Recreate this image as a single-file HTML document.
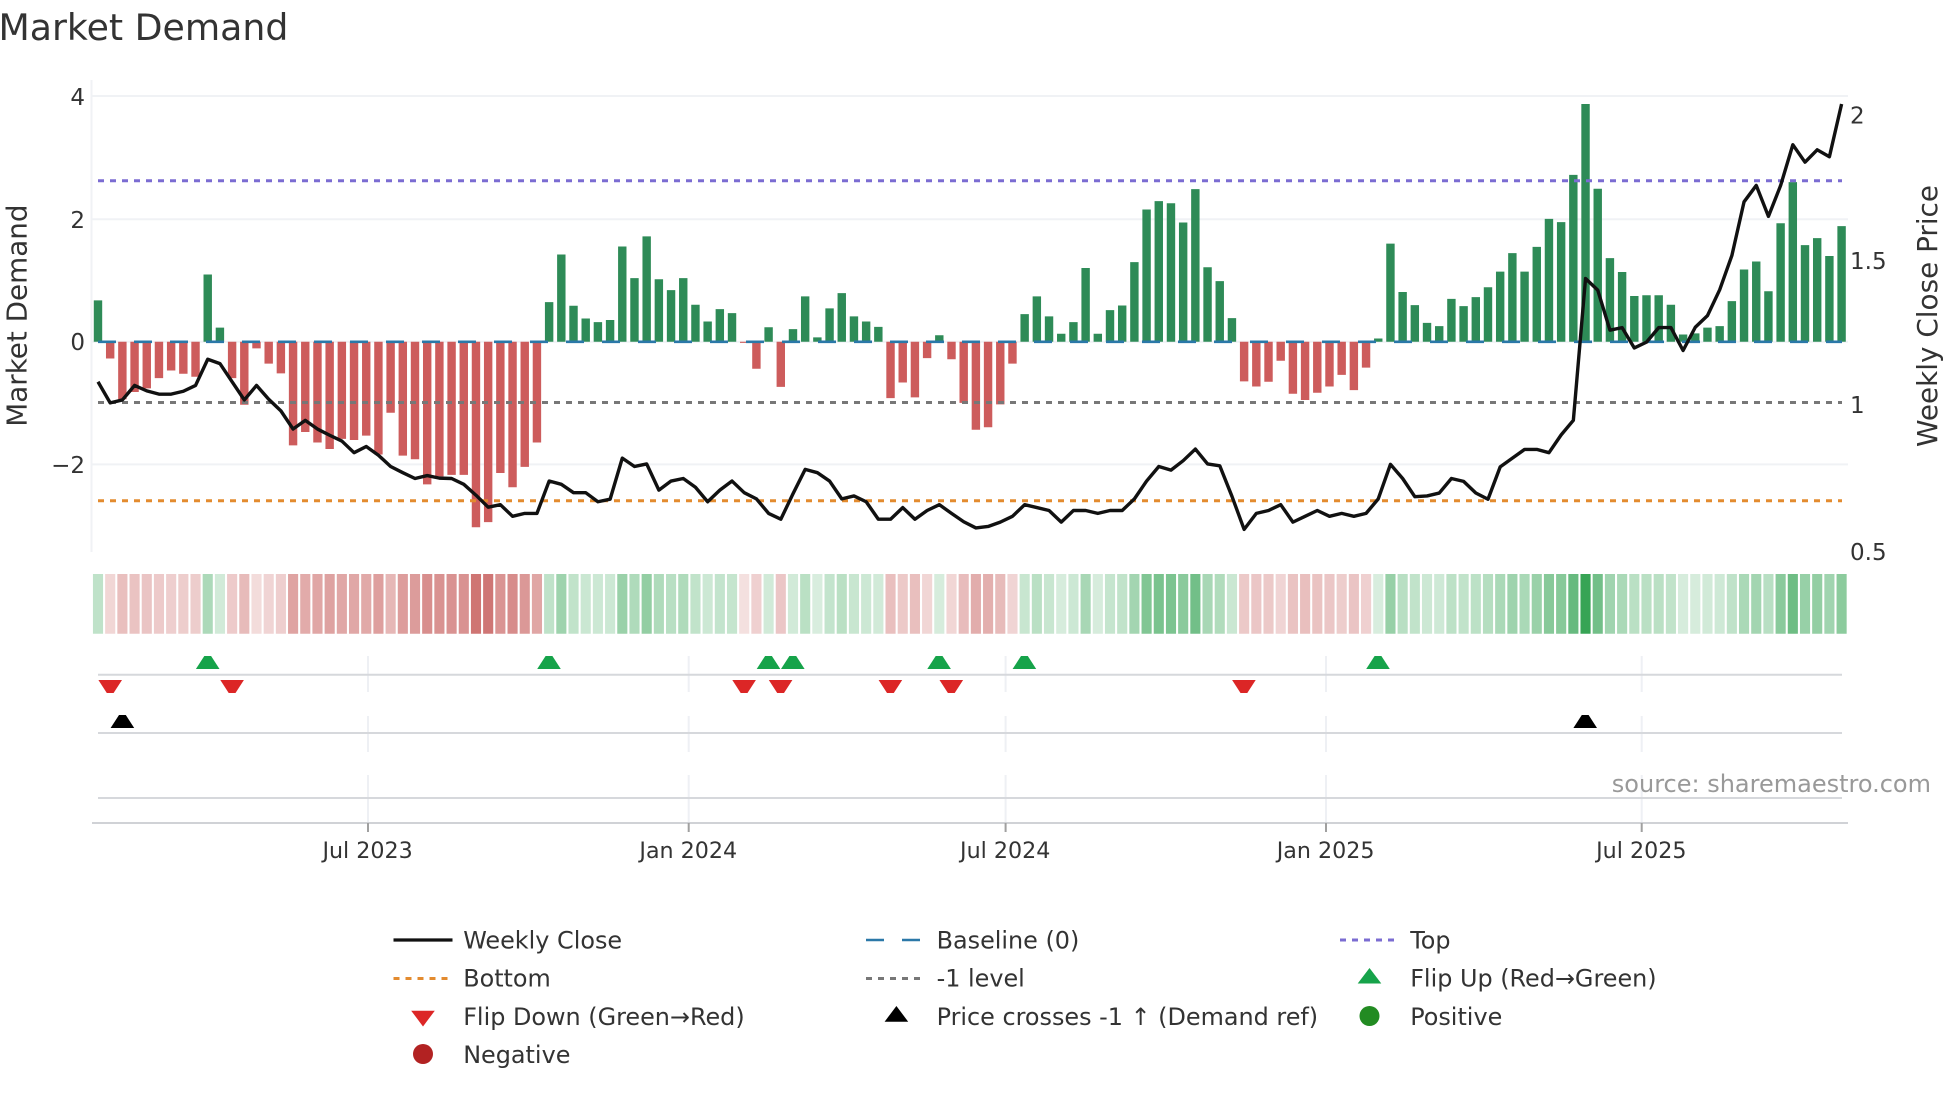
<!DOCTYPE html>
<html><head><meta charset="utf-8"><title>Market Demand</title>
<style>
html,body{margin:0;padding:0;background:#fff;width:1960px;height:1102px;overflow:hidden}
svg{display:block}
text{font-family:"DejaVu Sans","Liberation Sans",sans-serif;fill:#333}
</style></head><body>
<svg width="1960" height="1102" viewBox="0 0 1960 1102" xmlns="http://www.w3.org/2000/svg">
<rect width="1960" height="1102" fill="#fff"/>
<text x="-1.5" y="40" font-size="36.25">Market Demand</text>
<!-- grid -->
<g stroke="#f0f2f5" stroke-width="2" fill="none">
<path d="M91.5 80V552"/>
<path d="M92 96H1848M92 219.3H1848M92 341.8H1848M92 464.4H1848"/>
</g>
<!-- bars -->
<g transform="translate(93.78,341.8) scale(12.193,.3636)">
<path fill="#2e8b57" d="M0 0h.69V-114h-.69zM9 0h.69V-185h-.69zM10 0h.69V-39h-.69zM37 0h.69V-109h-.69zM38 0h.69V-240h-.69zM39 0h.69V-99h-.69zM40 0h.69V-64h-.69zM41 0h.69V-54h-.69zM42 0h.69V-60h-.69zM43 0h.69V-262h-.69zM44 0h.69V-175h-.69zM45 0h.69V-290h-.69zM46 0h.69V-172h-.69zM47 0h.69V-142h-.69zM48 0h.69V-175h-.69zM49 0h.69V-102h-.69zM50 0h.69V-56h-.69zM51 0h.69V-90h-.69zM52 0h.69V-79h-.69zM55 0h.69V-40h-.69zM57 0h.69V-35h-.69zM58 0h.69V-125h-.69zM59 0h.69V-12h-.69zM60 0h.69V-92h-.69zM61 0h.69V-134h-.69zM62 0h.69V-70h-.69zM63 0h.69V-56h-.69zM64 0h.69V-41h-.69zM69 0h.69V-18h-.69zM76 0h.69V-76h-.69zM77 0h.69V-125h-.69zM78 0h.69V-70h-.69zM79 0h.69V-22h-.69zM80 0h.69V-54h-.69zM81 0h.69V-203h-.69zM82 0h.69V-22h-.69zM83 0h.69V-87h-.69zM84 0h.69V-100h-.69zM85 0h.69V-219h-.69zM86 0h.69V-364h-.69zM87 0h.69V-387h-.69zM88 0h.69V-381h-.69zM89 0h.69V-328h-.69zM90 0h.69V-420h-.69zM91 0h.69V-205h-.69zM92 0h.69V-167h-.69zM93 0h.69V-65h-.69zM105 0h.69V-9h-.69zM106 0h.69V-270h-.69zM107 0h.69V-137h-.69zM108 0h.69V-101h-.69zM109 0h.69V-52h-.69zM110 0h.69V-43h-.69zM111 0h.69V-118h-.69zM112 0h.69V-98h-.69zM113 0h.69V-123h-.69zM114 0h.69V-150h-.69zM115 0h.69V-193h-.69zM116 0h.69V-244h-.69zM117 0h.69V-193h-.69zM118 0h.69V-261h-.69zM119 0h.69V-338h-.69zM120 0h.69V-329h-.69zM121 0h.69V-459h-.69zM122 0h.69V-654h-.69zM123 0h.69V-421h-.69zM124 0h.69V-230h-.69zM125 0h.69V-192h-.69zM126 0h.69V-126h-.69zM127 0h.69V-128h-.69zM128 0h.69V-128h-.69zM129 0h.69V-102h-.69zM130 0h.69V-20h-.69zM131 0h.69V-23h-.69zM132 0h.69V-39h-.69zM133 0h.69V-43h-.69zM134 0h.69V-112h-.69zM135 0h.69V-199h-.69zM136 0h.69V-221h-.69zM137 0h.69V-139h-.69zM138 0h.69V-326h-.69zM139 0h.69V-439h-.69zM140 0h.69V-266h-.69zM141 0h.69V-285h-.69zM142 0h.69V-236h-.69zM143 0h.69V-318h-.69z"/>
<path fill="#cd5c5c" d="M1 0h.69V46h-.69zM2 0h.69V158h-.69zM3 0h.69V138h-.69zM4 0h.69V128h-.69zM5 0h.69V100h-.69zM6 0h.69V79h-.69zM7 0h.69V88h-.69zM8 0h.69V96h-.69zM11 0h.69V100h-.69zM12 0h.69V173h-.69zM13 0h.69V18h-.69zM14 0h.69V60h-.69zM15 0h.69V87h-.69zM16 0h.69V285h-.69zM17 0h.69V248h-.69zM18 0h.69V277h-.69zM19 0h.69V295h-.69zM20 0h.69V267h-.69zM21 0h.69V270h-.69zM22 0h.69V258h-.69zM23 0h.69V310h-.69zM24 0h.69V195h-.69zM25 0h.69V313h-.69zM26 0h.69V323h-.69zM27 0h.69V392h-.69zM28 0h.69V370h-.69zM29 0h.69V366h-.69zM30 0h.69V366h-.69zM31 0h.69V510h-.69zM32 0h.69V496h-.69zM33 0h.69V361h-.69zM34 0h.69V400h-.69zM35 0h.69V344h-.69zM36 0h.69V277h-.69zM53 0h.69V3h-.69zM54 0h.69V74h-.69zM56 0h.69V124h-.69zM65 0h.69V155h-.69zM66 0h.69V112h-.69zM67 0h.69V153h-.69zM68 0h.69V45h-.69zM70 0h.69V48h-.69zM71 0h.69V168h-.69zM72 0h.69V242h-.69zM73 0h.69V235h-.69zM74 0h.69V172h-.69zM75 0h.69V60h-.69zM94 0h.69V109h-.69zM95 0h.69V123h-.69zM96 0h.69V110h-.69zM97 0h.69V52h-.69zM98 0h.69V143h-.69zM99 0h.69V160h-.69zM100 0h.69V140h-.69zM101 0h.69V123h-.69zM102 0h.69V91h-.69zM103 0h.69V133h-.69zM104 0h.69V71h-.69z"/>
</g>
<!-- reference lines -->
<g fill="none">
<path d="M98 341.8H1842" stroke="#2b78a8" stroke-width="2.6" stroke-dasharray="18 18"/>
<path d="M98 180.7H1842" stroke="#7b6cd2" stroke-width="3" stroke-dasharray="6 6"/>
<path d="M98 500.7H1842" stroke="#e38b2f" stroke-width="3" stroke-dasharray="6 6"/>
<path d="M98 402.5H1842" stroke="#777" stroke-width="3" stroke-dasharray="6 6"/>
</g>
<!-- price -->
<g transform="translate(98,0) scale(12.193,.3636)">
<polyline fill="none" stroke="#111" stroke-width="3.4" stroke-linejoin="round" vector-effect="non-scaling-stroke" points="0,1050 1,1108 2,1100 3,1060 4,1075 5,1084 6,1084 7,1076 8,1060 9,988 10,1000 11,1050 12,1100 13,1060 14,1098 15,1130 16,1180 17,1156 18,1180 19,1197 20,1213 21,1245 22,1228 23,1252 24,1283 25,1300 26,1316 27,1308 28,1315 29,1316 30,1332 31,1362 32,1395 33,1388 34,1420 35,1412 36,1412 37,1323 38,1332 39,1355 40,1355 41,1380 42,1373 43,1260 44,1283 45,1276 46,1348 47,1323 48,1316 49,1340 50,1380 51,1348 52,1323 53,1355 54,1372 55,1412 56,1428 57,1358 58,1291 59,1300 60,1323 61,1372 62,1364 63,1380 64,1428 65,1428 66,1396 67,1428 68,1404 69,1388 70,1412 71,1435 72,1452 73,1448 74,1436 75,1420 76,1388 77,1396 78,1404 79,1436 80,1404 81,1404 82,1412 83,1404 84,1404 85,1372 86,1323 87,1283 88,1293 89,1267 90,1235 91,1276 92,1281 93,1365 94,1456 95,1412 96,1404 97,1388 98,1436 99,1420 100,1404 101,1420 102,1412 103,1420 104,1412 105,1372 106,1277 107,1316 108,1366 109,1364 110,1356 111,1316 112,1324 113,1356 114,1373 115,1284 116,1260 117,1236 118,1236 119,1245 120,1196 121,1156 122,766 123,798 124,908 125,901 126,957 127,941 128,901 129,901 130,964 131,900 132,868 133,797 134,703 135,555 136,510 137,595 138,510 139,398 140,446 141,412 142,431 143,286"/>
</g>
<!-- axis labels -->
<g font-size="23" text-anchor="end">
<text x="85" y="104.8">4</text><text x="85" y="227.8">2</text><text x="85" y="350.2">0</text><text x="85" y="472.8">−2</text>
</g>
<g font-size="23">
<text x="1850" y="123.6">2</text><text x="1850" y="268.8">1.5</text><text x="1850" y="413.2">1</text><text x="1850" y="559.8">0.5</text>
</g>
<text transform="translate(26.5,315.6) rotate(-90)" font-size="27.8" text-anchor="middle">Market Demand</text>
<text transform="translate(1937,316) rotate(-90)" font-size="27.85" text-anchor="middle">Weekly Close Price</text>
<!-- heat strip -->
<g transform="translate(92.94,574) scale(12.193,59.8)">
<g fill="#19973c">
<path opacity=".28" d="M0 0h.83v1h-.83z"/><path opacity=".36" d="M9 0h.83v1h-.83z"/><path opacity=".2" d="M10 0h.83v1h-.83z"/><path opacity=".28" d="M37 0h.83v1h-.83z"/><path opacity=".42" d="M38 0h.83v1h-.83z"/><path opacity=".27" d="M39 0h.83v1h-.83z"/><path opacity=".23" d="M40 0h.83v1h-.83z"/><path opacity=".22" d="M41 0h.83v1h-.83z"/><path opacity=".22" d="M42 0h.83v1h-.83z"/><path opacity=".44" d="M43 0h.83v1h-.83z"/><path opacity=".35" d="M44 0h.83v1h-.83z"/><path opacity=".47" d="M45 0h.83v1h-.83z"/><path opacity=".35" d="M46 0h.83v1h-.83z"/><path opacity=".31" d="M47 0h.83v1h-.83z"/><path opacity=".35" d="M48 0h.83v1h-.83z"/><path opacity=".27" d="M49 0h.83v1h-.83z"/><path opacity=".22" d="M50 0h.83v1h-.83z"/><path opacity=".26" d="M51 0h.83v1h-.83z"/><path opacity=".25" d="M52 0h.83v1h-.83z"/><path opacity=".2" d="M55 0h.83v1h-.83z"/><path opacity=".2" d="M57 0h.83v1h-.83z"/><path opacity=".3" d="M58 0h.83v1h-.83z"/><path opacity=".17" d="M59 0h.83v1h-.83z"/><path opacity=".26" d="M60 0h.83v1h-.83z"/><path opacity=".3" d="M61 0h.83v1h-.83z"/><path opacity=".24" d="M62 0h.83v1h-.83z"/><path opacity=".22" d="M63 0h.83v1h-.83z"/><path opacity=".2" d="M64 0h.83v1h-.83z"/><path opacity=".18" d="M69 0h.83v1h-.83z"/><path opacity=".24" d="M76 0h.83v1h-.83z"/><path opacity=".3" d="M77 0h.83v1h-.83z"/><path opacity=".24" d="M78 0h.83v1h-.83z"/><path opacity=".18" d="M79 0h.83v1h-.83z"/><path opacity=".22" d="M80 0h.83v1h-.83z"/><path opacity=".38" d="M81 0h.83v1h-.83z"/><path opacity=".18" d="M82 0h.83v1h-.83z"/><path opacity=".25" d="M83 0h.83v1h-.83z"/><path opacity=".27" d="M84 0h.83v1h-.83z"/><path opacity=".4" d="M85 0h.83v1h-.83z"/><path opacity=".55" d="M86 0h.83v1h-.83z"/><path opacity=".58" d="M87 0h.83v1h-.83z"/><path opacity=".57" d="M88 0h.83v1h-.83z"/><path opacity=".51" d="M89 0h.83v1h-.83z"/><path opacity=".61" d="M90 0h.83v1h-.83z"/><path opacity=".38" d="M91 0h.83v1h-.83z"/><path opacity=".34" d="M92 0h.83v1h-.83z"/><path opacity=".23" d="M93 0h.83v1h-.83z"/><path opacity=".17" d="M105 0h.83v1h-.83z"/><path opacity=".45" d="M106 0h.83v1h-.83z"/><path opacity=".31" d="M107 0h.83v1h-.83z"/><path opacity=".27" d="M108 0h.83v1h-.83z"/><path opacity=".22" d="M109 0h.83v1h-.83z"/><path opacity=".21" d="M110 0h.83v1h-.83z"/><path opacity=".29" d="M111 0h.83v1h-.83z"/><path opacity=".27" d="M112 0h.83v1h-.83z"/><path opacity=".29" d="M113 0h.83v1h-.83z"/><path opacity=".32" d="M114 0h.83v1h-.83z"/><path opacity=".37" d="M115 0h.83v1h-.83z"/><path opacity=".42" d="M116 0h.83v1h-.83z"/><path opacity=".37" d="M117 0h.83v1h-.83z"/><path opacity=".44" d="M118 0h.83v1h-.83z"/><path opacity=".52" d="M119 0h.83v1h-.83z"/><path opacity=".52" d="M120 0h.83v1h-.83z"/><path opacity=".66" d="M121 0h.83v1h-.83z"/><path opacity=".87" d="M122 0h.83v1h-.83z"/><path opacity=".61" d="M123 0h.83v1h-.83z"/><path opacity=".41" d="M124 0h.83v1h-.83z"/><path opacity=".37" d="M125 0h.83v1h-.83z"/><path opacity=".3" d="M126 0h.83v1h-.83z"/><path opacity=".3" d="M127 0h.83v1h-.83z"/><path opacity=".3" d="M128 0h.83v1h-.83z"/><path opacity=".27" d="M129 0h.83v1h-.83z"/><path opacity=".18" d="M130 0h.83v1h-.83z"/><path opacity=".18" d="M131 0h.83v1h-.83z"/><path opacity=".2" d="M132 0h.83v1h-.83z"/><path opacity=".21" d="M133 0h.83v1h-.83z"/><path opacity=".28" d="M134 0h.83v1h-.83z"/><path opacity=".37" d="M135 0h.83v1h-.83z"/><path opacity=".4" d="M136 0h.83v1h-.83z"/><path opacity=".31" d="M137 0h.83v1h-.83z"/><path opacity=".51" d="M138 0h.83v1h-.83z"/><path opacity=".63" d="M139 0h.83v1h-.83z"/><path opacity=".45" d="M140 0h.83v1h-.83z"/><path opacity=".47" d="M141 0h.83v1h-.83z"/><path opacity=".41" d="M142 0h.83v1h-.83z"/><path opacity=".5" d="M143 0h.83v1h-.83z"/>
</g>
<g fill="#bb3c3a">
<path opacity=".21" d="M1 0h.83v1h-.83z"/><path opacity=".33" d="M2 0h.83v1h-.83z"/><path opacity=".31" d="M3 0h.83v1h-.83z"/><path opacity=".3" d="M4 0h.83v1h-.83z"/><path opacity=".27" d="M5 0h.83v1h-.83z"/><path opacity=".25" d="M6 0h.83v1h-.83z"/><path opacity=".26" d="M7 0h.83v1h-.83z"/><path opacity=".26" d="M8 0h.83v1h-.83z"/><path opacity=".27" d="M11 0h.83v1h-.83z"/><path opacity=".35" d="M12 0h.83v1h-.83z"/><path opacity=".18" d="M13 0h.83v1h-.83z"/><path opacity=".22" d="M14 0h.83v1h-.83z"/><path opacity=".25" d="M15 0h.83v1h-.83z"/><path opacity=".47" d="M16 0h.83v1h-.83z"/><path opacity=".43" d="M17 0h.83v1h-.83z"/><path opacity=".46" d="M18 0h.83v1h-.83z"/><path opacity=".48" d="M19 0h.83v1h-.83z"/><path opacity=".45" d="M20 0h.83v1h-.83z"/><path opacity=".45" d="M21 0h.83v1h-.83z"/><path opacity=".44" d="M22 0h.83v1h-.83z"/><path opacity=".49" d="M23 0h.83v1h-.83z"/><path opacity=".37" d="M24 0h.83v1h-.83z"/><path opacity=".5" d="M25 0h.83v1h-.83z"/><path opacity=".51" d="M26 0h.83v1h-.83z"/><path opacity=".58" d="M27 0h.83v1h-.83z"/><path opacity=".56" d="M28 0h.83v1h-.83z"/><path opacity=".56" d="M29 0h.83v1h-.83z"/><path opacity=".56" d="M30 0h.83v1h-.83z"/><path opacity=".71" d="M31 0h.83v1h-.83z"/><path opacity=".7" d="M32 0h.83v1h-.83z"/><path opacity=".55" d="M33 0h.83v1h-.83z"/><path opacity=".59" d="M34 0h.83v1h-.83z"/><path opacity=".53" d="M35 0h.83v1h-.83z"/><path opacity=".46" d="M36 0h.83v1h-.83z"/><path opacity=".16" d="M53 0h.83v1h-.83z"/><path opacity=".24" d="M54 0h.83v1h-.83z"/><path opacity=".29" d="M56 0h.83v1h-.83z"/><path opacity=".33" d="M65 0h.83v1h-.83z"/><path opacity=".28" d="M66 0h.83v1h-.83z"/><path opacity=".33" d="M67 0h.83v1h-.83z"/><path opacity=".21" d="M68 0h.83v1h-.83z"/><path opacity=".21" d="M70 0h.83v1h-.83z"/><path opacity=".34" d="M71 0h.83v1h-.83z"/><path opacity=".42" d="M72 0h.83v1h-.83z"/><path opacity=".41" d="M73 0h.83v1h-.83z"/><path opacity=".35" d="M74 0h.83v1h-.83z"/><path opacity=".22" d="M75 0h.83v1h-.83z"/><path opacity=".28" d="M94 0h.83v1h-.83z"/><path opacity=".29" d="M95 0h.83v1h-.83z"/><path opacity=".28" d="M96 0h.83v1h-.83z"/><path opacity=".22" d="M97 0h.83v1h-.83z"/><path opacity=".31" d="M98 0h.83v1h-.83z"/><path opacity=".33" d="M99 0h.83v1h-.83z"/><path opacity=".31" d="M100 0h.83v1h-.83z"/><path opacity=".29" d="M101 0h.83v1h-.83z"/><path opacity=".26" d="M102 0h.83v1h-.83z"/><path opacity=".3" d="M103 0h.83v1h-.83z"/><path opacity=".24" d="M104 0h.83v1h-.83z"/>
</g>
</g>
<!-- lower panels -->
<g fill="none" stroke-width="2">
<path stroke="#eef0f4" d="M368 656V692M368 716V752M368 775V823M688.7 656V692M688.7 716V752M688.7 775V823M1005.6 656V692M1005.6 716V752M1005.6 775V823M1326 656V692M1326 716V752M1326 775V823M1641.7 656V692M1641.7 716V752M1641.7 775V823"/>
<path stroke="#d6d8dc" d="M98 674.7H1842M98 733H1842M98 798H1842"/>
<path stroke="#d0d2d6" d="M92 823H1848"/>
<path stroke="#a0a0a0" d="M368 823V832M688.7 823V832M1005.6 823V832M1326 823V832M1641.7 823V832"/>
</g>
<g fill="#16a34a">
<path transform="translate(207.7,656)" d="M-11.8 13L-3.4 0H3.4L11.8 13z"/>
<path transform="translate(549,656)" d="M-11.8 13L-3.4 0H3.4L11.8 13z"/>
<path transform="translate(768.5,656)" d="M-11.8 13L-3.4 0H3.4L11.8 13z"/>
<path transform="translate(792.8,656)" d="M-11.8 13L-3.4 0H3.4L11.8 13z"/>
<path transform="translate(939.1,656)" d="M-11.8 13L-3.4 0H3.4L11.8 13z"/>
<path transform="translate(1024.4,656)" d="M-11.8 13L-3.4 0H3.4L11.8 13z"/>
<path transform="translate(1378,656)" d="M-11.8 13L-3.4 0H3.4L11.8 13z"/>
</g>
<g fill="#dc2626">
<path transform="translate(110.2,680)" d="M-11.8 0H11.8L3.4 13H-3.4z"/>
<path transform="translate(232.1,680)" d="M-11.8 0H11.8L3.4 13H-3.4z"/>
<path transform="translate(744.1,680)" d="M-11.8 0H11.8L3.4 13H-3.4z"/>
<path transform="translate(780.6,680)" d="M-11.8 0H11.8L3.4 13H-3.4z"/>
<path transform="translate(890.4,680)" d="M-11.8 0H11.8L3.4 13H-3.4z"/>
<path transform="translate(951.3,680)" d="M-11.8 0H11.8L3.4 13H-3.4z"/>
<path transform="translate(1243.9,680)" d="M-11.8 0H11.8L3.4 13H-3.4z"/>
</g>
<g fill="#000">
<path transform="translate(122.4,715)" d="M-11.8 13L-3.4 0H3.4L11.8 13z"/>
<path transform="translate(1585.2,715)" d="M-11.8 13L-3.4 0H3.4L11.8 13z"/>
</g>
<g font-size="22.2" text-anchor="middle">
<text x="367.6" y="858">Jul 2023</text><text x="688.3" y="858">Jan 2024</text><text x="1005.2" y="858">Jul 2024</text><text x="1325.6" y="858">Jan 2025</text><text x="1641.3" y="858">Jul 2025</text>
</g>
<text x="1931" y="792" font-size="24" text-anchor="end" style="fill:#999">source: sharemaestro.com</text>
<!-- legend -->
<g fill="none" stroke-width="3">
<path d="M393.5 940H452.5" stroke="#111" stroke-width="3.2"/>
<path d="M393.5 978.5H447.5" stroke="#e38b2f" stroke-dasharray="6 6"/>
<path d="M866 940H920" stroke="#2b78a8" stroke-width="2.6" stroke-dasharray="18 18"/>
<path d="M866 978.5H920" stroke="#777" stroke-dasharray="6 6"/>
<path d="M1340 940H1394.5" stroke="#7b6cd2" stroke-dasharray="6 6"/>
</g>
<path fill="#dc2626" d="M411.2 1010.7H434.8L423 1026.5z"/>
<circle cx="423" cy="1054" r="10" fill="#b22222"/>
<path fill="#000" d="M896.4 1006L908.2 1021.7H884.6z"/>
<path fill="#16a34a" d="M1369.5 968L1381.3 983.5H1357.7z"/>
<circle cx="1369.5" cy="1016" r="10" fill="#228b22"/>
<g font-size="23.9">
<text x="463.2" y="948.3">Weekly Close</text>
<text x="463.2" y="986.6">Bottom</text>
<text x="463.2" y="1024.8">Flip Down (Green→Red)</text>
<text x="463.2" y="1063">Negative</text>
<text x="936.6" y="948.3">Baseline (0)</text>
<text x="936.6" y="986.6">-1 level</text>
<text x="936.6" y="1024.8">Price crosses -1 ↑ (Demand ref)</text>
<text x="1410.2" y="948.3">Top</text>
<text x="1410.2" y="986.6">Flip Up (Red→Green)</text>
<text x="1410.2" y="1024.8">Positive</text>
</g>
</svg>
</body></html>
